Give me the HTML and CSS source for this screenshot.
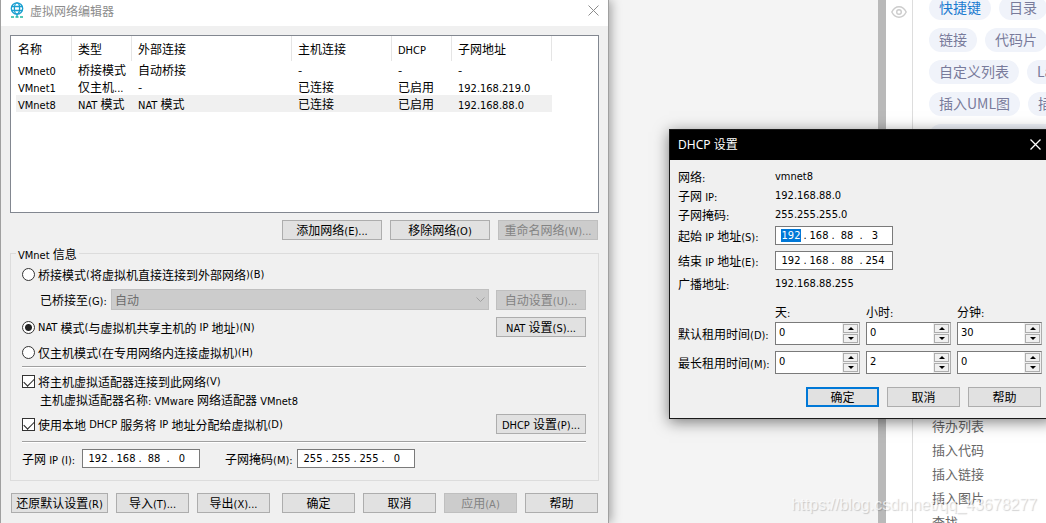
FILE: index.html
```
<!DOCTYPE html>
<html lang="zh-CN">
<head>
<meta charset="utf-8">
<title>虚拟网络编辑器</title>
<link rel="stylesheet" href="styles.css">
</head>
<body>
<main class="window">
  <header class="titlebar">
    <svg class="globe" viewBox="0 0 14 16" fill="none" stroke="#1a9fd0" stroke-width="1.3"><circle cx="7" cy="6.5" r="5.7"/><ellipse cx="7" cy="6.5" rx="2.6" ry="5.7"/><path d="M1.5 4.5h11M1.5 8.5h11M7 12v3"/><path stroke="#1fb8a0" d="M1 15h3M5.5 15h3M10 15h3"/></svg>
    <h1>虚拟网络编辑器</h1>
    <button class="close" aria-label="关闭"><svg viewBox="0 0 11 11" fill="none" stroke="currentColor"><path d="M.5.5l10 10M10.5.5l-10 10"/></svg></button>
  </header>
  <div class="content">
    <div class="listview">
      <table>
        <colgroup><col class="c56"><col class="c60"><col class="c160"><col class="c100"><col class="c60"><col class="c100"></colgroup>
        <thead><tr><th>名称</th><th>类型</th><th>外部连接</th><th>主机连接</th><th><span class="en">DHCP</span></th><th>子网地址</th></tr></thead>
        <tbody>
          <tr><td><span class="en">VMnet0</span></td><td>桥接模式</td><td>自动桥接</td><td>-</td><td>-</td><td>-</td></tr>
          <tr><td><span class="en">VMnet1</span></td><td>仅主机<span class="en">...</span></td><td>-</td><td>已连接</td><td>已启用</td><td><span class="en">192.168.219.0</span></td></tr>
          <tr class="selected"><td><span class="en">VMnet8</span></td><td><span class="en">NAT </span>模式</td><td><span class="en">NAT </span>模式</td><td>已连接</td><td>已启用</td><td><span class="en">192.168.88.0</span></td></tr>
        </tbody>
      </table>
    </div>
    <div class="actions">
      <button class="btn wide">添加网络<span class="en">(E)...</span></button>
      <button class="btn wide">移除网络<span class="en">(O)</span></button>
      <button class="btn wide" disabled>重命名网络<span class="en">(W)...</span></button>
    </div>
    <fieldset class="group">
      <legend><span class="en">VMnet </span>信息</legend>
      <div class="row">
        <label class="check"><input type="radio" name="mode">桥接模式<span class="en">(</span>将虚拟机直接连接到外部网络<span class="en">)(B)</span></label>
      </div>
      <div class="row bridge">
        <label for="bridge">已桥接至<span class="en">(G):</span></label>
        <div class="combo">
          <select id="bridge" disabled><option>自动</option></select>
          <svg class="chevron" viewBox="0 0 9 5" fill="none" stroke="#a0a0a0"><path d="M.5.5l4 4 4-4"/></svg>
        </div>
        <button class="btn medium" disabled>自动设置<span class="en">(U)...</span></button>
      </div>
      <div class="row">
        <label class="check"><input type="radio" name="mode" checked><span class="en">NAT </span>模式<span class="en">(</span>与虚拟机共享主机的<span class="en"> IP </span>地址<span class="en">)(N)</span></label>
        <button class="btn medium"><span class="en">NAT </span>设置<span class="en">(S)...</span></button>
      </div>
      <div class="row">
        <label class="check"><input type="radio" name="mode">仅主机模式<span class="en">(</span>在专用网络内连接虚拟机<span class="en">)(H)</span></label>
      </div>
      <hr>
      <div class="row">
        <label class="check"><input type="checkbox" checked>将主机虚拟适配器连接到此网络<span class="en">(V)</span></label>
      </div>
      <p class="note">主机虚拟适配器名称<span class="en">: VMware </span>网络适配器<span class="en"> VMnet8</span></p>
      <div class="row">
        <label class="check"><input type="checkbox" checked>使用本地<span class="en"> DHCP </span>服务将<span class="en"> IP </span>地址分配给虚拟机<span class="en">(D)</span></label>
        <button class="btn medium"><span class="en">DHCP </span>设置<span class="en">(P)...</span></button>
      </div>
      <hr>
      <div class="row subnet">
        <label for="ip1">子网<span class="en"> IP (I):</span></label>
        <div class="ip"><input id="ip1" value="192"><b>.</b><input aria-label="子网 IP 2" value="168"><b>.</b><input aria-label="子网 IP 3" value="88"><b>.</b><input aria-label="子网 IP 4" value="0"></div>
        <label for="mask1">子网掩码<span class="en">(M):</span></label>
        <div class="ip"><input id="mask1" value="255"><b>.</b><input aria-label="子网掩码 2" value="255"><b>.</b><input aria-label="子网掩码 3" value="255"><b>.</b><input aria-label="子网掩码 4" value="0"></div>
      </div>
    </fieldset>
    <footer class="footer">
      <button class="btn restore">还原默认设置<span class="en">(R)</span></button>
      <button class="btn">导入<span class="en">(T)...</span></button>
      <button class="btn">导出<span class="en">(X)...</span></button>
      <button class="btn confirm">确定</button>
      <button class="btn">取消</button>
      <button class="btn" disabled>应用<span class="en">(A)</span></button>
      <button class="btn">帮助</button>
    </footer>
  </div>
</main>

<div class="pane"></div>
<div class="scrollbar"></div>
<div class="rail">
  <svg viewBox="0 0 16 12" fill="none" stroke="#ccc" stroke-width="1.4"><path d="M.8 6C2.5 2.6 5 .8 8 .8S13.500 2.600 15.200 6C13.500 9.400 11 11.200 8 11.200S2.500 9.400.8 6z"/><circle cx="8" cy="6" r="2.300"/></svg>
</div>
<aside class="help">
  <div class="tags">
    <div><a href="#" class="active">快捷键</a><a href="#">目录</a></div>
    <div><a href="#">链接</a><a href="#">代码片</a></div>
    <div><a href="#">自定义列表</a><a href="#">LaTeX</a></div>
    <div><a href="#">插入UML图</a><a href="#">插入</a></div>
    <div><span class="blank"></span></div>
  </div>
  <ul class="topics"><li>待办列表</li><li>插入代码</li><li>插入链接</li><li>插入图片</li><li>查找</li></ul>
</aside>

<section class="dialog" role="dialog" aria-labelledby="dhcp-title">
  <header>
    <h2 id="dhcp-title"><span>DHCP </span>设置</h2>
    <button class="close" aria-label="关闭"><svg viewBox="0 0 11 11" fill="none" stroke="currentColor" stroke-width="1.3"><path d="M.5.5l10 10M10.5.5l-10 10"/></svg></button>
  </header>
  <div class="form">
    <dl class="line"><dt>网络<span class="en">:</span></dt><dd>vmnet8</dd></dl>
    <dl class="line"><dt>子网<span class="en"> IP:</span></dt><dd>192.168.88.0</dd></dl>
    <dl class="line"><dt>子网掩码<span class="en">:</span></dt><dd>255.255.255.0</dd></dl>
    <div class="line field">
      <label for="start">起始<span class="en"> IP </span>地址<span class="en">(S):</span></label>
      <div class="ip"><input id="start" class="marked" value="192"><b>.</b><input aria-label="起始 2" value="168"><b>.</b><input aria-label="起始 3" value="88"><b>.</b><input aria-label="起始 4" value="3"></div>
    </div>
    <div class="line field">
      <label for="end">结束<span class="en"> IP </span>地址<span class="en">(E):</span></label>
      <div class="ip"><input id="end" value="192"><b>.</b><input aria-label="结束 2" value="168"><b>.</b><input aria-label="结束 3" value="88"><b>.</b><input aria-label="结束 4" value="254"></div>
    </div>
    <dl class="line"><dt>广播地址<span class="en">:</span></dt><dd>192.168.88.255</dd></dl>
    <div class="line units"><span></span><span>天<span class="en">:</span></span><span>小时<span class="en">:</span></span><span>分钟<span class="en">:</span></span></div>
    <div class="line lease">
      <label for="def">默认租用时间<span class="en">(D):</span></label>
      <div class="spin"><input id="def" value="0"><div class="steps"><button class="up" aria-label="增加"></button><button class="down" aria-label="减少"></button></div></div>
      <div class="spin"><input aria-label="默认小时" value="0"><div class="steps"><button class="up" aria-label="增加"></button><button class="down" aria-label="减少"></button></div></div>
      <div class="spin"><input aria-label="默认分钟" value="30"><div class="steps"><button class="up" aria-label="增加"></button><button class="down" aria-label="减少"></button></div></div>
    </div>
    <div class="line lease">
      <label for="max">最长租用时间<span class="en">(M):</span></label>
      <div class="spin"><input id="max" value="0"><div class="steps"><button class="up" aria-label="增加"></button><button class="down" aria-label="减少"></button></div></div>
      <div class="spin"><input aria-label="最长小时" value="2"><div class="steps"><button class="up" aria-label="增加"></button><button class="down" aria-label="减少"></button></div></div>
      <div class="spin"><input aria-label="最长分钟" value="0"><div class="steps"><button class="up" aria-label="增加"></button><button class="down" aria-label="减少"></button></div></div>
    </div>
    <div class="dialog-actions">
      <button class="btn primary">确定</button>
      <button class="btn">取消</button>
      <button class="btn">帮助</button>
    </div>
  </div>
</section>
<div class="watermark">https://blog.csdn.net/qq_43678277</div>
</body>
</html>
```
FILE: styles.css
```
* { box-sizing: border-box; margin: 0; }

body {
  display: flex;
  position: relative;
  height: 100vh;
  overflow: hidden;
  background: #fff;
  color: #000;
  font: 12px/17px "Noto Sans CJK SC", sans-serif;
  white-space: nowrap;
}

button, input, select { font: inherit; color: inherit; padding: 0; }
h1, h2, th, b { font-size: inherit; font-weight: normal; }
.en, .ip, dd, .spin input { font-family: "DejaVu Sans Condensed", "DejaVu Sans", sans-serif; font-size: 11px; }
span.en { line-height: 1; white-space: pre; }

/* Main window */
.window {
  flex: 1 1 0;
  min-width: 0;
  border: solid #a0a0a0;
  border-width: 0 1px;
  background: #f0f0f0;
  box-shadow: 2px 0 10px rgba(0, 0, 0, .35);
  z-index: 1;
}
.titlebar {
  display: flex;
  align-items: center;
  height: 26px;
  padding: 0 9px 6px;
  background: #fff;
  color: #8c8c8c;
}
.globe { width: 14px; height: 16px; margin-right: 6px; }
.close { display: flex; margin-left: auto; border: 0; background: none; color: inherit; }
.close svg { width: 11px; height: 11px; }
.content { padding: 9px 9px 0; }

.listview { height: 178px; padding-left: 5px; border: 1px solid #828790; background: #fff; }
table { table-layout: fixed; width: 536px; border-collapse: collapse; text-align: left; }
.c56 { width: 56px; }
.c60 { width: 60px; }
.c100 { width: 100px; }
.c160 { width: 160px; }
th, td { height: 17px; padding: 0 0 0 6px; line-height: 15px; }
th { height: 25px; box-shadow: inset -1px 0 #e5e5e5; }
th:first-child, td:first-child { padding-left: 2px; }
.selected { background: #f0f0f0; }

.btn {
  width: 73px;
  height: 20px;
  border: 1px solid #adadad;
  background: #e1e1e1;
  line-height: 16px;
  text-align: center;
}
.btn:disabled { border-color: #bfbfbf; background: #ccc; color: #838383; }
.wide { width: 100px; }
.medium { width: 90px; margin-left: auto; }
.primary { border: 2px solid #0078d7; line-height: 14px; }
.actions { display: flex; justify-content: flex-end; gap: 8px; padding: 7px 1px 0 0; }

.group {
  min-width: 0;
  margin-top: 5px;
  padding: 2px 12px 12px 11px;
  border: 1px solid #dcdcdc;
}
.group legend { margin-left: -6px; padding: 0 2px; }
.row { display: flex; align-items: center; height: 20px; margin-bottom: 5px; }
.check { display: flex; align-items: center; }
.check input {
  appearance: none;
  width: 13px;
  height: 13px;
  margin: 0 3px 0 0;
  border: 1px solid #333;
  background: #fff;
}
.check input[type="radio"] { border-radius: 50%; }
.check input[type="radio"]:checked { background: radial-gradient(circle, #222 3px, #fff 4px); }
.check input[type="checkbox"]:checked::before {
  content: "";
  display: block;
  width: 9px;
  height: 5px;
  margin: 2px 0 0 1px;
  border: solid #222;
  border-width: 0 0 1px 1px;
  transform: rotate(-45deg);
}
.bridge { height: 21px; margin-bottom: 7px; padding-left: 18px; }
.bridge .btn { margin-left: 7px; }
.bridge label { width: 71px; }
.combo { position: relative; flex: 1; height: 21px; }
.combo select {
  appearance: none;
  display: block;
  width: 100%;
  height: 21px;
  padding: 0 3px;
  border: 1px solid #bfbfbf;
  border-radius: 0;
  background: #ccc;
  color: #6d6d6d;
  opacity: 1;
}
.chevron { position: absolute; right: 4px; top: 8px; width: 9px; height: 5px; }
hr { height: 2px; border: solid; border-width: 1px 0; border-color: #a0a0a0 transparent #fff; margin: -1px 0 3px; }
.note { margin: -5px 0 6px; padding-left: 18px; }
.note + .row { margin-bottom: 8px; }
.subnet { margin: 5px 0 0; }
.subnet label { width: 60px; }
.subnet .ip + label { width: 72px; margin-left: 25px; }

.ip {
  display: flex;
  align-items: center;
  width: 118px;
  height: 19px;
  padding-left: 3px;
  border: 1px solid #7a7a7a;
  background: #fff;
}
.ip input { width: 24px; height: 15px; border: 0; background: none; text-align: center; }
.ip b { width: 4px; text-align: center; }
.ip .marked { background: linear-gradient(#0078d7, #0078d7) center / 20px 13px no-repeat; color: #fff; }

.footer { display: flex; gap: 8px; padding: 12px 1px 0; }
.restore { width: 97px; }
.confirm { margin-left: auto; }

/* Page behind the windows */
.pane { flex: 0 0 269px; background: #f4f4f4; }
.scrollbar { flex: 0 0 8px; background: #b9b9b9; }
.rail { flex: 0 0 26px; padding: 4px 5px; }
.rail svg { width: 16px; height: 12px; }
.help {
  display: flex;
  flex: 0 0 134px;
  flex-direction: column;
  justify-content: space-between;
  overflow: hidden;
  padding-left: 16px;
  border-left: 1px solid #ddd;
}
.tags { display: grid; gap: 8px; margin-top: -4px; font-size: 14px; }
.tags div { display: flex; gap: 8px; }
.tags a, .blank {
  flex: none;
  height: 24px;
  padding: 0 10px;
  border-radius: 12px;
  background: #f0f3fa;
  color: #797b9b;
  line-height: 22px;
  text-decoration: none;
}
.tags .active { color: #1c7bd0; }
.blank { width: 140px; }
.topics { margin-bottom: -11px; padding-left: 3px; color: #666; font-size: 13px; line-height: 24px; list-style: none; }

/* DHCP dialog */
.dialog {
  position: absolute;
  z-index: 2;
  top: 129px;
  right: -8px;
  width: 385px;
  border: 1px solid #1a1a1a;
  background: #f0f0f0;
  box-shadow: 0 3px 14px rgba(0, 0, 0, .5);
}
.dialog header {
  display: flex;
  align-items: center;
  height: 30px;
  padding: 0 12px 2px 8px;
  background: #000;
  color: #fff;
}
.dialog h2 span { font-family: "Noto Sans", sans-serif; white-space: pre; }
.form { padding: 7px 11px 11px 8px; }
.line { display: grid; grid-template-columns: 91px repeat(3, 85px); column-gap: 6px; align-items: center; height: 19px; }
.line dd { grid-column: span 3; }
.field { margin: 2px 0 6px; }
.field + .field { margin-bottom: 4px; }
.units { margin-top: 9px; margin-bottom: 1px; }
.lease { height: 23px; margin-bottom: 6px; }
.spin { display: flex; height: 23px; border: 1px solid; border-color: #7a7a7a #adadad #7a7a7a #7a7a7a; background: #fff; }
.spin input { flex: 1; min-width: 0; padding: 0 0 3px 3px; border: 0; background: none; }
.steps { display: grid; gap: 1px; width: 17px; padding: 1px; background: #f0f0f0; }
.steps button { display: flex; align-items: center; justify-content: center; border: 1px solid #adadad; background: #f0f0f0; }
.steps button::before { content: ""; border: solid transparent; border-width: 0 3px; }
.steps .up::before { border-bottom: 3px solid #000; }
.steps .down::before { border-top: 3px solid #000; }
.dialog-actions { display: flex; justify-content: flex-end; gap: 8px; padding: 7px 1px 0 0; }

.watermark {
  position: absolute;
  z-index: 3;
  right: 9px;
  bottom: 8px;
  color: rgba(255, 255, 255, .7);
  font: 16px/20px "Liberation Sans", sans-serif;
  text-shadow: 1px 1px 1px rgba(0, 0, 0, .18);
}
```
